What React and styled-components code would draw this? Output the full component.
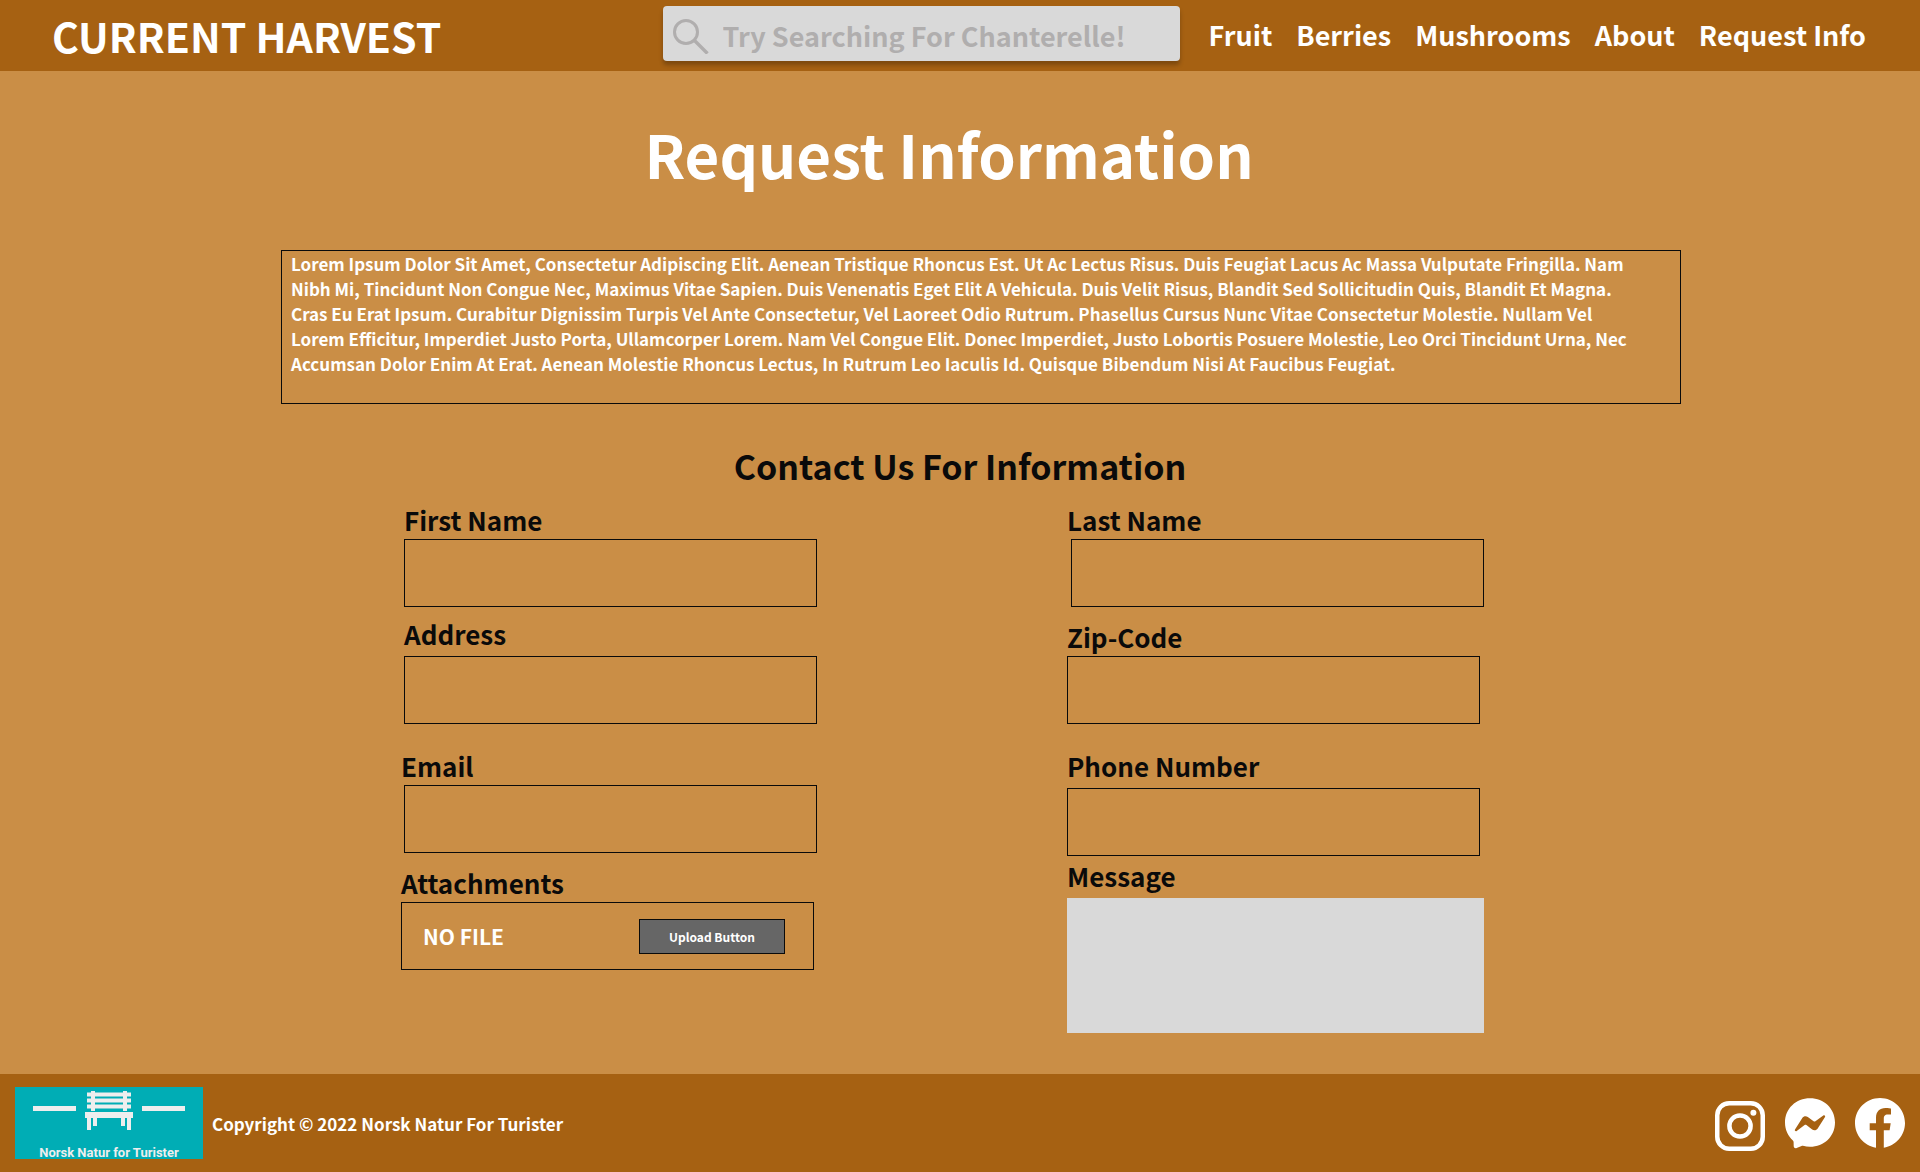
import React from "react";
import styled, { createGlobalStyle } from "styled-components";

const GlobalStyle = createGlobalStyle`
  *, *::before, *::after { box-sizing: border-box; }
  body {
    margin: 0;
    background: #ca8e46;
    color: #0a0a0a;
    font-family: "Noto Sans CJK SC", "Noto Sans", sans-serif;
    font-weight: 700;
  }
  input, textarea, button { font: inherit; color: inherit; }
`;

const Page = styled.div`
  min-height: 100vh;
  display: flex;
  flex-direction: column;
`;

const Header = styled.header`
  display: flex;
  align-items: center;
  min-height: 71px;
  padding: 0 54px 0 52px;
  background: #a66112;
  color: #fff;
`;

const Brand = styled.a`
  margin-right: auto;
  padding-bottom: 2px;
  color: inherit;
  text-decoration: none;
  font-size: 41px;
  line-height: 64px;
  white-space: nowrap;
`;

const Search = styled.label`
  width: 517px;
  min-width: 0;
  display: flex;
  align-items: center;
  gap: 12px;
  height: 55px;
  margin: 0 29px 4px 20px;
  padding: 0 10px;
  background: #d9d9d9;
  border-radius: 4px;
  box-shadow: 0 4px 4px rgba(0, 0, 0, 0.25);
  color: #b0aeae;
`;

const SearchInput = styled.input`
  flex: 1;
  width: 100%;
  min-width: 0;
  height: 48px;
  margin-top: 4px;
  padding: 0;
  border: 0;
  outline: 0;
  background: transparent;
  font-size: 27px;
  &::placeholder { color: #b0aeae; opacity: 1; }
`;

const Nav = styled.nav`
  display: flex;
  gap: 24px;
  padding-bottom: 2px;
`;

const NavLink = styled.a`
  color: inherit;
  text-decoration: none;
  font-size: 27px;
  line-height: 40px;
  white-space: nowrap;
`;

const Main = styled.main`
  flex: 1;
  display: flex;
  flex-direction: column;
  align-items: center;
  padding-bottom: 40px;
`;

const Title = styled.h1`
  margin: 36px 0 0;
  padding-right: 22px;
  color: #fff;
  font-size: 60px;
  line-height: 92px;
`;

const Intro = styled.p`
  width: 1400px;
  max-width: 100%;
  min-height: 154px;
  margin: 51px 0 0 42px;
  padding: 0 40px 0 9px;
  border: 1px solid #0a0a0a;
  color: #fff;
  font-size: 17px;
  line-height: 25px;
`;

const Subtitle = styled.h2`
  margin: 36px 0 0;
  font-size: 34px;
  line-height: 52px;
`;

const Form = styled.form`
  display: grid;
  grid-template-columns: 416px 417px;
  column-gap: 250px;
  padding-right: 35px;
  margin-top: 11px;
`;

const Column = styled.div`
  display: flex;
  flex-direction: column;
`;

const Field = styled.div`
  display: flex;
  flex-direction: column;
  gap: ${(p) => (p.$loose ? "6px" : "3px")};
  margin-top: ${(p) => p.$space || 0}px;
  padding-left: ${(p) => (p.$inset ? "3px" : 0)};
`;

const Label = styled.label`
  font-size: 26px;
  line-height: 33px;
`;

const TextBox = styled.input`
  width: 413px;
  height: 68px;
  align-self: ${(p) => (p.$end ? "flex-end" : "flex-start")};
  padding: 0 20px;
  border: 1px solid #0a0a0a;
  border-radius: 0;
  background: transparent;
  font-size: 21px;
`;

const MessageBox = styled.textarea`
  width: 100%;
  height: 135px;
  padding: 12px 20px;
  border: 0;
  resize: none;
  background: #d9d9d9;
  font-size: 21px;
`;

const FileBox = styled.div`
  display: flex;
  align-items: center;
  justify-content: space-between;
  width: 413px;
  height: 68px;
  padding: 0 28px 0 21px;
  border: 1px solid #0a0a0a;
  color: #fff;
  font-size: 21px;
`;

const UploadButton = styled.button`
  width: 146px;
  height: 35px;
  padding: 0;
  border: 1px solid #0a0a0a;
  background: #666;
  color: #fff;
  font-size: 12px;
`;

const Footer = styled.footer`
  display: flex;
  align-items: center;
  gap: 9px;
  min-height: 98px;
  padding: 0 15px;
  background: #a66112;
  color: #fff;
  font-size: 17px;
`;

const Socials = styled.div`
  display: flex;
  gap: 20px;
  margin-left: auto;
`;

const SocialLink = styled.a`
  display: flex;
  color: inherit;
`;

const SearchIcon = () => (
  <svg width="38" height="40" viewBox="0 0 38 40" fill="none" stroke="#b0aeae" aria-hidden="true">
    <circle cx="13" cy="18" r="11.500" strokeWidth="3" />
    <path d="M21.500 26.500L34.500 39.500" strokeWidth="3.400" />
  </svg>
);

const BenchLogo = () => (
  <svg width="188" height="72" viewBox="0 0 188 72" role="img" aria-label="Norsk Natur for Turister">
    <rect width="188" height="72" fill="#00adb5" />
    <g fill="#eee">
      <rect x="18" y="19" width="43" height="5" />
      <rect x="127" y="19" width="43" height="5" />
      <rect x="72" y="5.500" width="44" height="4" />
      <rect x="72" y="11.500" width="44" height="4" />
      <rect x="72" y="17.500" width="44" height="4" />
      <rect x="76" y="4" width="4" height="20" />
      <rect x="108" y="4" width="4" height="20" />
      <rect x="70" y="25" width="48" height="6" />
      <rect x="72" y="30" width="4" height="13" />
      <rect x="78" y="30" width="4" height="9" />
      <rect x="106" y="30" width="4" height="9" />
      <rect x="112" y="30" width="4" height="13" />
    </g>
    <text x="94" y="70" textAnchor="middle" fill="#eee" fontFamily="Roboto, sans-serif" fontSize="13" fontWeight="700">
      Norsk Natur for Turister
    </text>
  </svg>
);

const InstagramIcon = () => (
  <svg width="50" height="56" viewBox="0 0 50 56" aria-hidden="true">
    <rect x="2.250" y="8.250" width="45.500" height="45.500" rx="12" fill="none" stroke="currentColor" strokeWidth="4.500" />
    <circle cx="25" cy="31" r="10.600" fill="none" stroke="currentColor" strokeWidth="4.500" />
    <circle cx="38.400" cy="17.700" r="3" fill="currentColor" />
  </svg>
);

const MessengerIcon = () => (
  <svg width="50" height="56" viewBox="0 -3 50 56" aria-hidden="true">
    <path
      fill="currentColor"
      fillRule="evenodd"
      d="M25 0.300C11 0.300 0 10.600 0 24.500c0 7.300 3 13.500 7.900 17.900.4.400.7.900.7 1.500l.1 4.400c.1 1.500 1.500 2.400 2.900 1.800l5-2.200c.4-.2.900-.2 1.300-.1 2.300.6 4.700 1 7.100 1 14 0 25-10.300 25-24.300S39 .3 25 .3zM10 31.500l7.300-11.600c1.200-1.900 3.700-2.300 5.500-1l5.800 4.400c.6.400 1.300.4 1.800 0l7.900-5.900c1-.8 2.400.4 1.700 1.500l-7.300 11.600c-1.200 1.900-3.700 2.300-5.500 1l-5.800-4.400c-.6-.4-1.300-.4-1.800 0l-7.900 5.900c-1 .8-2.400-.4-1.700-1.500z"
    />
  </svg>
);

const FacebookIcon = () => (
  <svg width="50" height="56" viewBox="0 -3 50 56" aria-hidden="true">
    <path
      fill="currentColor"
      d="M50 25C50 11.200 38.800 0 25 0S0 11.200 0 25c0 12.400 9 22.700 21 24.700V32.200h-6.300V25.300H21v-5.500C21 13.500 24.700 10 30.400 10c2.700 0 5.600.5 5.600.5v6.100h-3.200c-3.100 0-4 1.900-4 3.900v4.800h6.900l-1.100 6.900h-5.800v17.500C41 47.700 50 37.400 50 25z"
    />
  </svg>
);

const links = ["Fruit", "Berries", "Mushrooms", "About", "Request Info"];

export default function App() {
  return (
    <Page>
      <GlobalStyle />
      <Header>
        <Brand href="#">CURRENT HARVEST</Brand>
        <Search>
          <SearchIcon />
          <SearchInput type="search" aria-label="Search" placeholder="Try Searching For Chanterelle!" />
        </Search>
        <Nav>
          {links.map((name) => (
            <NavLink href="#" key={name}>{name}</NavLink>
          ))}
        </Nav>
      </Header>
      <Main>
        <Title>Request Information</Title>
        <Intro>
          Lorem Ipsum Dolor Sit Amet, Consectetur Adipiscing Elit. Aenean Tristique Rhoncus Est. Ut Ac Lectus Risus.
          Duis Feugiat Lacus Ac Massa Vulputate Fringilla. Nam Nibh Mi, Tincidunt Non Congue Nec, Maximus Vitae Sapien.
          Duis Venenatis Eget Elit A Vehicula. Duis Velit Risus, Blandit Sed Sollicitudin Quis, Blandit Et Magna. Cras
          Eu Erat Ipsum. Curabitur Dignissim Turpis Vel Ante Consectetur, Vel Laoreet Odio Rutrum. Phasellus Cursus Nunc
          Vitae Consectetur Molestie. Nullam Vel Lorem Efficitur, Imperdiet Justo Porta, Ullamcorper Lorem. Nam Vel
          Congue Elit. Donec Imperdiet, Justo Lobortis Posuere Molestie, Leo Orci Tincidunt Urna, Nec Accumsan Dolor
          Enim At Erat. Aenean Molestie Rhoncus Lectus, In Rutrum Leo Iaculis Id. Quisque Bibendum Nisi At Faucibus
          Feugiat.
        </Intro>
        <Subtitle>Contact Us For Information</Subtitle>
        <Form>
          <Column>
            <Field $inset>
              <Label htmlFor="first-name">First Name</Label>
              <TextBox id="first-name" />
            </Field>
            <Field $inset $loose $space={10}>
              <Label htmlFor="address">Address</Label>
              <TextBox id="address" />
            </Field>
            <Field $space={25}>
              <Label htmlFor="email">Email</Label>
              <TextBox id="email" type="email" $end />
            </Field>
            <Field $space={13}>
              <Label htmlFor="upload">Attachments</Label>
              <FileBox>
                NO FILE
                <UploadButton id="upload" type="button">Upload Button</UploadButton>
              </FileBox>
            </Field>
          </Column>
          <Column>
            <Field>
              <Label htmlFor="last-name">Last Name</Label>
              <TextBox id="last-name" $end />
            </Field>
            <Field $space={13}>
              <Label htmlFor="zip">Zip-Code</Label>
              <TextBox id="zip" />
            </Field>
            <Field $loose $space={25}>
              <Label htmlFor="phone">Phone Number</Label>
              <TextBox id="phone" type="tel" />
            </Field>
            <Field $loose $space={3}>
              <Label htmlFor="message">Message</Label>
              <MessageBox id="message" />
            </Field>
          </Column>
        </Form>
      </Main>
      <Footer>
        <BenchLogo />
        <span>Copyright © 2022 Norsk Natur For Turister</span>
        <Socials>
          <SocialLink href="#" aria-label="Instagram"><InstagramIcon /></SocialLink>
          <SocialLink href="#" aria-label="Messenger"><MessengerIcon /></SocialLink>
          <SocialLink href="#" aria-label="Facebook"><FacebookIcon /></SocialLink>
        </Socials>
      </Footer>
    </Page>
  );
}
